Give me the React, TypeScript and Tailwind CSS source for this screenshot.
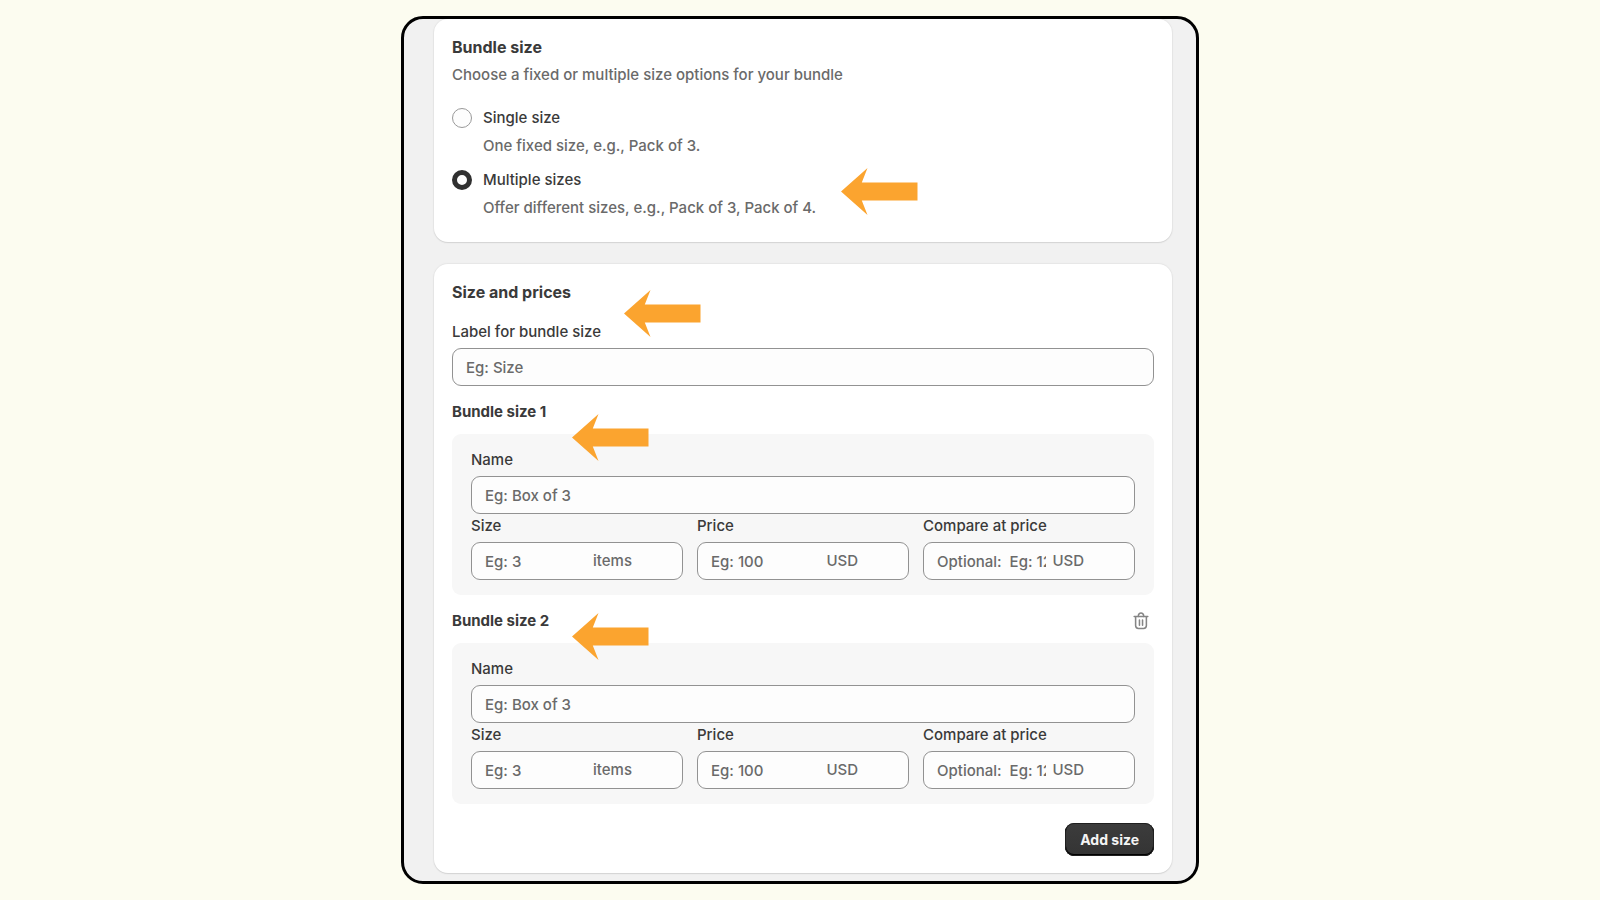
import { useId, type ReactNode } from "react";

function Arrow({ className }: { className: string }) {
  return (
    <svg
      aria-hidden="true"
      viewBox="0 0 77 47"
      className={`pointer-events-none absolute z-10 h-[47px] w-[77px] ${className}`}
    >
      <path d="M0 23.5 26.5 0 20.8 14.5H76.5V32.5H20.8L26.5 47Z" fill="#fba42f" />
    </svg>
  );
}

function TrashIcon() {
  return (
    <svg
      aria-hidden="true"
      viewBox="0 0 20 20"
      className="size-[22px]"
      fill="none"
      stroke="#858585"
      strokeWidth="1.4"
      strokeLinecap="round"
      strokeLinejoin="round"
    >
      <path d="M3.8 6h12.4" />
      <path d="M7.6 5.8V5.2a2.4 2.4 0 0 1 4.8 0v.6" />
      <path d="M5.1 6.2v8a2.6 2.6 0 0 0 2.6 2.6h4.6a2.6 2.6 0 0 0 2.6-2.6v-8" />
      <path d="M8.6 9v4.8M11.4 9v4.8" />
    </svg>
  );
}

type RadioProps = {
  label: string;
  help: string;
  defaultChecked?: boolean;
};

function RadioOption({ label, help, defaultChecked }: RadioProps) {
  const id = useId();
  return (
    <div className="flex gap-[11px]">
      <input
        id={id}
        type="radio"
        name="bundle-size"
        defaultChecked={defaultChecked}
        aria-describedby={`${id}-help`}
        className="mt-0.5 size-5 shrink-0 appearance-none rounded-full border border-[#999999] bg-[#fdfdfd] checked:border-[5px] checked:border-[#303030]"
      />
      <div className="flex flex-col gap-1">
        <label htmlFor={id}>{label}</label>
        <p id={`${id}-help`} className="text-[#6a6a6a]">
          {help}
        </p>
      </div>
    </div>
  );
}

type FieldProps = {
  label: string;
  placeholder: string;
  suffix?: string;
};

function Field({ label, placeholder, suffix }: FieldProps) {
  const id = useId();
  return (
    <div className="flex min-w-0 flex-col gap-1">
      <label htmlFor={id}>{label}</label>
      <div className="flex h-[38px] items-center gap-1.5 rounded-[9px] border border-[#929292] bg-[#fdfdfd] px-[13px]">
        <input
          id={id}
          type="text"
          placeholder={placeholder}
          className="h-full w-full min-w-0 flex-1 bg-transparent outline-none placeholder:text-[#6a6a6a]"
        />
        {suffix && <span className="mr-[37px] text-[#6a6a6a]">{suffix}</span>}
      </div>
    </div>
  );
}

function Card({ className, children }: { className: string; children: ReactNode }) {
  return (
    <section
      className={`relative flex flex-col rounded-[14px] bg-white px-[18px] pt-[18px] shadow-[0_1px_1px_#d4d4d4,0_0_1px_1px_#e6e6e6] ${className}`}
    >
      {children}
    </section>
  );
}

type BundleProps = {
  title: string;
  arrow: string;
  removable?: boolean;
};

function BundleSize({ title, arrow, removable }: BundleProps) {
  return (
    <div className="mt-3.5">
      <div className="relative flex h-6 items-center justify-between">
        <h3 className="font-bold">{title}</h3>
        {removable && (
          <button type="button" aria-label={`Remove ${title}`} className="mr-0.5">
            <TrashIcon />
          </button>
        )}
        <Arrow className={arrow} />
      </div>
      <div className="mt-2.5 rounded-[9px] bg-[#f7f7f7] px-[19px] pt-3.5 pb-[15px]">
        <Field label="Name" placeholder="Eg: Box of 3" />
        <div className="grid grid-cols-3 gap-3.5">
          <Field label="Size" placeholder="Eg: 3" suffix="items" />
          <Field label="Price" placeholder="Eg: 100" suffix="USD" />
          <Field label="Compare at price" placeholder="Optional:  Eg: 120" suffix="USD" />
        </div>
      </div>
    </div>
  );
}

export default function App() {
  return (
    <div className="flex min-h-screen justify-center bg-[#fcfcf0] py-4 font-['Inter',sans-serif] text-[15px] leading-6 font-medium text-[#3a3a3a]">
      <main className="flex w-full max-w-[798px] flex-col gap-[22px] overflow-hidden rounded-[22px] border-3 border-black bg-[#f1f1f1] pr-6 pb-2 pl-[30px]">
        <Card className="pb-[22px]">
          <h2 className="mb-1.5 text-base leading-5 font-bold">Bundle size</h2>
          <p className="text-[#6a6a6a]">
            Choose a fixed or multiple size options for your bundle
          </p>
          <div className="mt-[19px] flex flex-col gap-2.5">
            <RadioOption label="Single size" help="One fixed size, e.g., Pack of 3." />
            <RadioOption
              label="Multiple sizes"
              help="Offer different sizes, e.g., Pack of 3, Pack of 4."
              defaultChecked
            />
          </div>
          <Arrow className="top-[149px] left-[407px]" />
        </Card>

        <Card className="pb-[17px]">
          <h2 className="mb-[18px] text-base leading-5 font-bold">Size and prices</h2>
          <Field label="Label for bundle size" placeholder="Eg: Size" />
          <BundleSize title="Bundle size 1" arrow="top-3.5 left-[120px]" />
          <BundleSize title="Bundle size 2" arrow="top-1 left-[120px]" removable />
          <button
            type="button"
            className="mt-[19px] h-[33px] self-end rounded-[9px] bg-linear-to-b from-[#3c3c3c] to-[#343434] px-[15px] text-sm font-bold text-[#f4f4f4] shadow-[inset_0_0_0_1px_#1f1f1f,inset_0_-1px_0_1px_#000]"
          >
            Add size
          </button>
          <Arrow className="top-[26px] left-[190px]" />
        </Card>
      </main>
    </div>
  );
}
